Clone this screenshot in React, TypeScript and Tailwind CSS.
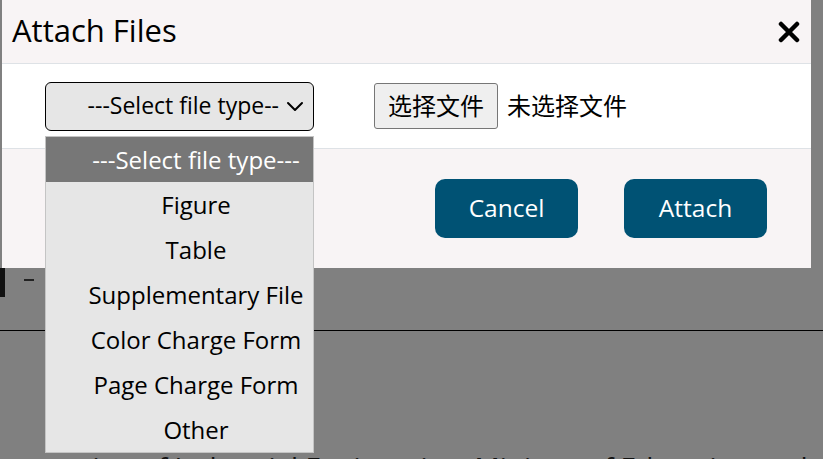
const font = { fontFamily: '"Open Sans", "Noto Sans CJK SC", sans-serif' };

const fileTypes = [
  "Figure",
  "Table",
  "Supplementary File",
  "Color Charge Form",
  "Page Charge Form",
  "Other",
];

function Chevron() {
  return (
    <svg width="18" height="12" viewBox="0 0 18 12" fill="none" className="shrink-0">
      <path d="M2 3l7 7 7-7" stroke="#000" strokeWidth="2" strokeLinecap="round" strokeLinejoin="round" />
    </svg>
  );
}

function CloseIcon() {
  return (
    <svg width="22" height="22" viewBox="0 0 22 22">
      <path d="M3 3l16 16M19 3L3 19" stroke="#000" strokeWidth="4.5" strokeLinecap="round" />
    </svg>
  );
}

export default function App() {
  return (
    <div className="relative w-[823px] h-[459px] overflow-hidden bg-[#808080] text-black" style={font}>
      {/* page behind the overlay */}
      <div className="flex flex-col pt-[268px]">
        <div className="flex items-start h-[29px]">
          <div className="w-[5px] h-[29px] bg-[#111]" />
          <div className="ml-[19px] mt-[11px] w-[10px] h-[2px] bg-[#222]" />
        </div>
        <div className="mt-[33px] border-b border-black" />
        <p className="mt-[119px] -ml-[6px] whitespace-nowrap text-[28px] leading-[34px] text-[#111]">
          Innovation of Industrial Engineering, Ministry of Education and
        </p>
      </div>

      {/* modal */}
      <div className="absolute left-[2px] top-0 w-[809px] flex flex-col">
        <div className="h-[64px] flex items-center justify-between pl-[10px] pr-[11px] bg-[#f8f4f5] border-b border-[#dee2e6]">
          <h2 className="text-[31px] leading-none pb-[2px]">Attach Files</h2>
          <button className="flex items-center justify-center w-[22px] h-[22px]">
            <CloseIcon />
          </button>
        </div>
        <div className="h-[85px] flex items-center bg-white border-b border-[#dee2e6] pl-[43px]">
          <div className="w-[269px] h-[49px] flex items-center justify-end gap-[7px] pr-[9px] rounded-md border border-black bg-[#e6e6e6]">
            <span className="text-[23px] leading-none pb-[2px]">---Select file type--</span>
            <Chevron />
          </div>
          <div className="ml-[60px] flex items-center gap-[9px]">
            <button className="w-[124px] h-[46px] rounded-[3px] border border-[#767676] bg-[#efefef] text-[24px] leading-none">
              选择文件
            </button>
            <span className="text-[24px] leading-none">未选择文件</span>
          </div>
        </div>
        <div className="h-[119px] flex items-center justify-end gap-[46px] pr-[44px] bg-[#f8f4f5]">
          <button className="w-[143px] h-[59px] rounded-[10px] bg-[#005274] text-white text-[24.5px]">Cancel</button>
          <button className="w-[143px] h-[59px] rounded-[10px] bg-[#005274] text-white text-[24.5px]">Attach</button>
        </div>
      </div>

      {/* open select list */}
      <ul className="absolute left-[45px] top-[136px] w-[269px] border border-[#c4c4c4] bg-[#e6e6e6] text-[24px]">
        <li className="h-[45px] flex items-center justify-center pl-[33px] bg-[#777777] text-white">---Select file type---</li>
        {fileTypes.map((t) => (
          <li key={t} className="h-[45px] flex items-center justify-center pl-[33px]">
            {t}
          </li>
        ))}
      </ul>
    </div>
  );
}
